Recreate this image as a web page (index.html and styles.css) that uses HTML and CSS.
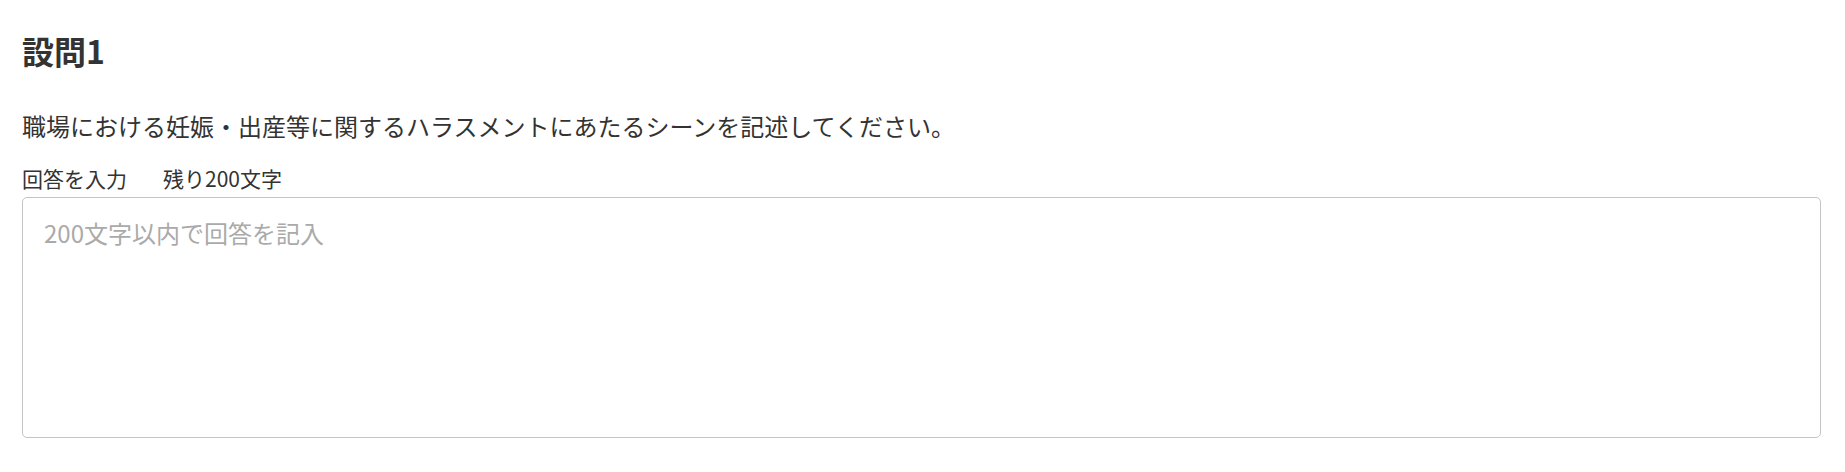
FILE: index.html
```html
<!DOCTYPE html>
<html lang="ja">
<head>
    <meta charset="UTF-8">
    <meta name="viewport" content="width=device-width, initial-scale=1.0">
    <title>設問1</title>
    <link rel="stylesheet" href="styles.css">
</head>
<body>
    <div class="question">
        <h2 class="question-title">設問1</h2>
        <p class="question-text">職場における妊娠・出産等に関するハラスメントにあたるシーンを記述してください。</p>
        <div class="answer-head">
            <label for="answer1">回答を入力</label>
            <span class="remaining">残り200文字</span>
        </div>
        <textarea id="answer1" class="answer" maxlength="200" placeholder="200文字以内で回答を記入"></textarea>
    </div>
</body>
</html>
```

FILE: styles.css
```css
body { margin: 0; padding: 0 24px 0 22px; font-family: "Noto Sans CJK JP", "Noto Sans", sans-serif; color: #333; background: #fff; }
.question { display: flex; flex-direction: column; }
.question-title { margin: 26px 0 0; font-size: 32px; line-height: 48px; font-weight: 700; }
.question-text { margin: 34px 0 0; font-size: 24px; line-height: 36px; }
.answer-head { margin-top: 19px; display: flex; gap: 36px; font-size: 21px; line-height: 30px; }
.answer { margin-top: 4px; box-sizing: border-box; width: 100%; height: 241px; padding: 17px 21px 15px; border: 1px solid #c4c4c4; border-radius: 5px; font-family: inherit; font-size: 24px; line-height: 36px; color: #333; resize: none; outline: none; }
.answer::placeholder { color: #aaa; }
```
